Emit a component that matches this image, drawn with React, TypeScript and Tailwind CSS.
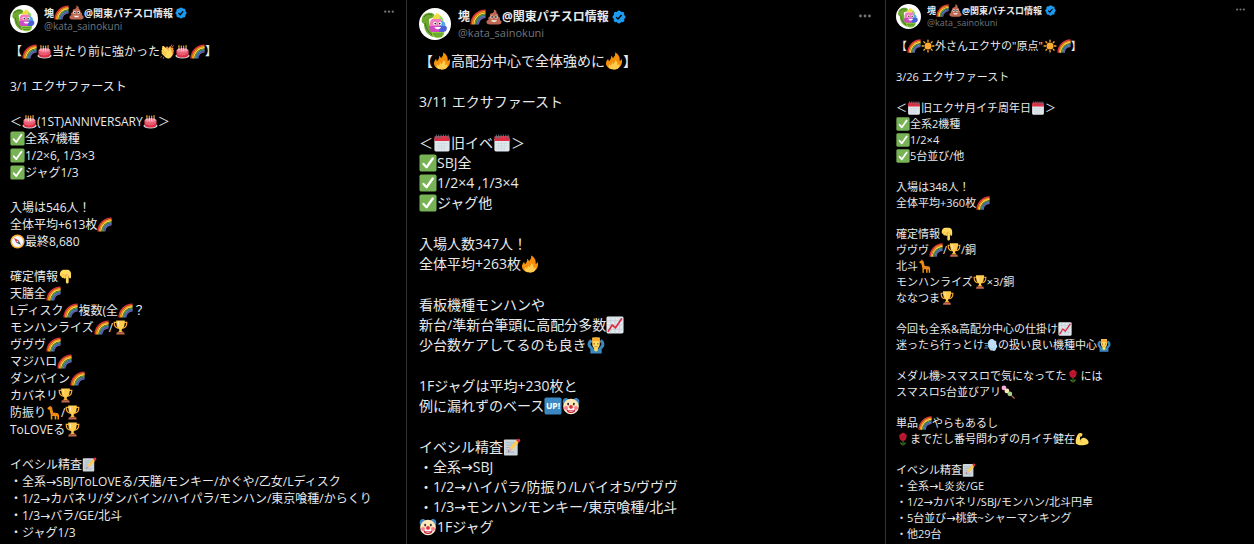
import { ReactNode } from 'react';

type PostSize = 'small' | 'medium' | 'large';

type Post = {
  id: string;
  size: PostSize;
  paragraphs: string[][];
};

const author = {
  name: '塊🌈💩@関東パチスロ情報',
  handle: '@kata_sainokuni',
};

const posts: Post[] = [
  {
    id: '0301',
    size: 'medium',
    paragraphs: [
      ['【🌈🎂当たり前に強かった👏🎂🌈】'],
      ['3/1 エクサファースト'],
      ['＜🎂(1ST)ANNIVERSARY🎂＞', '✅全系7機種', '✅1/2×6, 1/3×3', '✅ジャグ1/3'],
      ['入場は546人！', '全体平均+613枚🌈', '🧭最終8,680'],
      [
        '確定情報👇',
        '天膳全🌈',
        'Lディスク🌈複数(全🌈？',
        'モンハンライズ🌈/🏆',
        'ヴヴヴ🌈',
        'マジハロ🌈',
        'ダンバイン🌈',
        'カバネリ🏆',
        '防振り🦒/🏆',
        'ToLOVEる🏆',
      ],
      [
        'イベシル精査📝',
        '・全系→SBJ/ToLOVEる/天膳/モンキー/かぐや/乙女/Lディスク',
        '・1/2→カバネリ/ダンバイン/ハイパラ/モンハン/東京喰種/からくり',
        '・1/3→バラ/GE/北斗',
        '・ジャグ1/3',
      ],
    ],
  },
  {
    id: '0311',
    size: 'large',
    paragraphs: [
      ['【🔥高配分中心で全体強めに🔥】'],
      ['3/11 エクサファースト'],
      ['＜🗓旧イベ🗓＞', '✅SBJ全', '✅1/2×4 ,1/3×4', '✅ジャグ他'],
      ['入場人数347人！', '全体平均+263枚🔥'],
      ['看板機種モンハンや', '新台/準新台筆頭に高配分多数📈', '少台数ケアしてるのも良き🙆'],
      ['1Fジャグは平均+230枚と', '例に漏れずのベース🆙🤡'],
      [
        'イベシル精査📝',
        '・全系→SBJ',
        '・1/2→ハイパラ/防振り/Lバイオ5/ヴヴヴ',
        '・1/3→モンハン/モンキー/東京喰種/北斗',
        '🤡1Fジャグ',
      ],
    ],
  },
  {
    id: '0326',
    size: 'small',
    paragraphs: [
      ['【🌈☀外さんエクサの"原点"☀🌈】'],
      ['3/26 エクサファースト'],
      ['＜🗓旧エクサ月イチ周年日🗓＞', '✅全系2機種', '✅1/2×4', '✅5台並び/他'],
      ['入場は348人！', '全体平均+360枚🌈'],
      ['確定情報👇', 'ヴヴヴ🌈/🏆/銅', '北斗🦒', 'モンハンライズ🏆×3/銅', 'ななつま🏆'],
      ['今回も全系&高配分中心の仕掛け📈', '迷ったら行っとけ💨の扱い良い機種中心🙆'],
      ['メダル機>スマスロで気になってた🌹には', 'スマスロ5台並びアリ🍡'],
      ['単品🌈やらもあるし', '🌹までだし番号問わずの月イチ健在💪'],
      [
        'イベシル精査📝',
        '・全系→L炎炎/GE',
        '・1/2→カバネリ/SBJ/モンハン/北斗円卓',
        '・5台並び→桃鉄~シャーマンキング',
        '・他29台',
      ],
    ],
  },
];

const sizes = {
  small: {
    card: 'px-[10px] pt-1',
    avatar: 'size-[25px]',
    header: 'gap-[6px]',
    name: 'text-[9px] leading-[13px]',
    nameEmoji: 'size-[13px]',
    badge: 'size-[11px] ml-[3px]',
    handle: 'text-[9px] leading-[12px]',
    more: 'w-[9px] mt-1 -mr-px',
    body: 'mt-[9px] gap-[15px] text-[11px] leading-[16px]',
    emoji: 'size-[14px]',
  },
  medium: {
    card: 'px-[10px] pt-[5px]',
    avatar: 'size-[28px]',
    header: 'gap-[6px]',
    name: 'text-[10px] leading-[14px]',
    nameEmoji: 'size-[15px]',
    badge: 'size-[12px] ml-[2px]',
    handle: 'text-[10px] leading-[13px]',
    more: 'w-[10px] mt-[5px] mr-[2px]',
    body: 'mt-[10px] gap-[18px] text-[12px] leading-[17px]',
    emoji: 'size-[15px]',
  },
  large: {
    card: 'px-3 pt-2',
    avatar: 'size-[32px]',
    header: 'gap-[7px]',
    name: 'text-[12px] leading-[17px]',
    nameEmoji: 'size-[16px]',
    badge: 'size-[14px] ml-[3px]',
    handle: 'text-[11px] leading-[15px]',
    more: 'w-[12px] mt-[6px] mr-[2px]',
    body: 'mt-[11px] gap-[21px] text-[14px] leading-[20px]',
    emoji: 'size-[18px]',
  },
};

const emojis: Record<string, { label: string; art: ReactNode }> = {
  '🌈': {
    label: '虹',
    art: (
      <g fill="none" strokeWidth="3.6">
        <path stroke="#DD2E44" d="M1.8 36A34.2 34.2 0 0 1 36 1.8" />
        <path stroke="#F4900C" d="M5.2 36A30.8 30.8 0 0 1 36 5.2" />
        <path stroke="#FFCC4D" d="M8.6 36A27.4 27.4 0 0 1 36 8.6" />
        <path stroke="#5C913B" d="M12 36A24 24 0 0 1 36 12" />
        <path stroke="#3B88C3" d="M15.4 36A20.6 20.6 0 0 1 36 15.4" />
        <path stroke="#6F5BA8" d="M18.6 36A17.4 17.4 0 0 1 36 18.6" />
      </g>
    ),
  },
  '🎂': {
    label: 'バースデーケーキ',
    art: (
      <>
        <ellipse cx="18" cy="29" rx="18" ry="7" fill="#CCD6DD" />
        <path fill="#DD2E44" d="M3 18h30v9c0 4-7 6.5-15 6.5S3 31 3 27z" />
        <path fill="#EA596E" d="M3 15h30v7c-2 5-5 1-7 4s-5 0-8 2-5-2-8-1-5-3-7-5z" />
        <ellipse cx="18" cy="15" rx="15" ry="5.5" fill="#F4829A" />
        <path stroke="#FFE0C2" strokeWidth="2.6" d="M9 7v8M15 8v9M21 8v9M27 7v8" />
        <path stroke="#FFAC33" strokeWidth="3" strokeLinecap="round" d="M9 3v3M15 4v3M21 4v3M27 3v3" />
      </>
    ),
  },
  '👏': {
    label: '拍手',
    art: (
      <>
        <path fill="#EF9645" d="M13 9c3-5 6-4 7 0l4-4c4-2 5 2 3 4l3-1c4 0 4 3 2 5 3 1 3 4 1 6 2 4-3 12-10 13L10 27z" />
        <path fill="#FFDC5D" d="M5 8c-2 2-1 4 0 5-3 1-3 4-1 6-2 2-1 4 1 6l8 8c5 4 12 3 15-2 4-5 2-9 0-13l-3-8c-2-3-5-1-4 2l1 5L9 5c-3-2-6 0-4 3z" />
        <path stroke="#F19020" strokeWidth="1.3" fill="none" strokeLinecap="round" d="M5 13l10 9M4 19l9 8" />
        <path stroke="#FA743E" strokeWidth="2" strokeLinecap="round" d="M29 1l-2 4M34 3l-4 3M3 30l-2 3M8 33l-1 3" />
      </>
    ),
  },
  '✅': {
    label: 'チェック',
    art: (
      <>
        <rect width="36" height="36" rx="4" fill="#77B255" />
        <path fill="none" stroke="#FFF" strokeWidth="4.8" strokeLinecap="round" strokeLinejoin="round" d="M8.5 20l6.5 7L28 8.5" />
      </>
    ),
  },
  '🧭': {
    label: 'コンパス',
    art: (
      <>
        <circle cx="18" cy="18" r="18" fill="#FFAC33" />
        <circle cx="18" cy="18" r="14" fill="#F5F8FA" />
        <path fill="#DD2E44" d="M9 9l12 6-6 6z" />
        <path fill="#50616E" d="M27 27l-12-6 6-6z" />
        <circle cx="18" cy="18" r="2" fill="#FFF" />
      </>
    ),
  },
  '👇': {
    label: '下向き指',
    art: (
      <>
        <path fill="#FFDC5D" d="M12 1h12c5 1 8 5 8 10v9c0 4-5 4-5 0l-1-2v14c0 5-7 5-7 0V21c-1 3-5 3-6 0-2 2-6 0-5-3-4 0-5-4-4-8 1-5 4-8 8-9z" />
        <path fill="none" stroke="#EF9645" strokeWidth="1.6" strokeLinecap="round" d="M8 18c0-3 1-5 4-5M13 21c0-4 2-5 6-5M19 21v-8c3-1 6 1 7 5" />
      </>
    ),
  },
  '🏆': {
    label: 'トロフィー',
    art: (
      <>
        <path fill="none" stroke="#FFAC33" strokeWidth="3" d="M9 5H2c0 9 4 14 10 15M27 5h7c0 9-4 14-10 15" />
        <path fill="#FFCC4D" d="M7 0h22c0 12-2 20-8 23v5h-6v-5C9 20 7 12 7 0z" />
        <path fill="#FFAC33" d="M14 26h8l2 4H12z" />
        <path fill="#C1694F" d="M9 30h18l2 6H7z" />
        <path fill="#FFE8B6" d="M11 3h3c0 7 0 11 2 15-4-4-5-8-5-15z" />
      </>
    ),
  },
  '🦒': {
    label: 'キリン',
    art: (
      <>
        <path fill="#F4900C" d="M3 6l5-3 1-3 2 3c3 1 4 3 4 6l2 9 9 1c4 0 6 3 6 7v10h-4v-8l-3-1v9h-4v-9h-6v9h-4V24L8 11l-5-1z" />
        <path fill="#C1694F" d="M9 5h2v2H9zM11 11l3 1v3zM14 19l4 2-2 4zM21 20l4 1-2 3zM27 22l3 3-3 1z" />
      </>
    ),
  },
  '📝': {
    label: 'メモ',
    art: (
      <>
        <rect x="1" y="2" width="29" height="34" rx="2" fill="#CCD6DD" />
        <path stroke="#99AAB5" strokeWidth="1.5" d="M5 9h19M5 14h16M5 19h10M5 24h8M5 29h18" />
        <path fill="#FFCC4D" d="M27 4l5 5-14 15-6 2 1-6z" />
        <path fill="#F4ABBA" d="M10 28l3-9 6 5z" />
        <path fill="#DD2E44" d="M30 1c3-2 7 2 5 5l-3 3-5-5z" />
        <path fill="#292F33" d="M10 28l1-3 2 2z" />
      </>
    ),
  },
  '🔥': {
    label: '炎',
    art: (
      <>
        <path fill="#F4900C" d="M35 19c0-2-1-5-2-6 0 2-1 4-3 5C31 9 27 3 20 0c2 5-1 8-4 12-1-2-2-4-4-5 1 5-2 8-4 11-2-1-2-3-2-5-3 3-5 6-5 10 0 8 8 13 17 13s17-8 17-17z" />
        <path fill="#FFCC4D" d="M29 24c-1 2-2 3-4 3 1-5-1-9-4-11 0 4-3 6-4 9-1-1-2-2-2-4-2 2-3 5-4 7-1-1-2-2-2-4-7 9 3 12 9 12 7 0 14-4 11-12z" />
      </>
    ),
  },
  '🗓': {
    label: 'カレンダー',
    art: (
      <>
        <path fill="#E1E8ED" d="M2 9h32v24a3 3 0 0 1-3 3H5a3 3 0 0 1-3-3z" />
        <path fill="#DD2E44" d="M5 3h26a3 3 0 0 1 3 3v8H2V6a3 3 0 0 1 3-3z" />
        <path stroke="#66757F" strokeWidth="2" strokeLinecap="round" d="M6 1v6M11 1v6M16 1v6M21 1v6M26 1v6M31 1v6" />
        <path stroke="#C6D1D8" strokeWidth="1" d="M6 19h24M6 24h24M6 29h18M11 16v17M17 16v17M23 16v17" />
      </>
    ),
  },
  '📈': {
    label: '上昇グラフ',
    art: (
      <>
        <rect width="36" height="36" rx="3" fill="#E1E8ED" />
        <path stroke="#B4C2CC" strokeWidth="1.2" d="M0 9h36M0 18h36M0 27h36M9 0v36M18 0v36M27 0v36" />
        <path fill="none" stroke="#DD2E44" strokeWidth="3.6" strokeLinecap="round" strokeLinejoin="round" d="M4 31l8-13 7 6L32 5" />
      </>
    ),
  },
  '🙆': {
    label: 'OKのポーズの男性',
    art: (
      <>
        <path fill="#3B88C3" d="M6 36v-9L1 21c-2-6 0-11 5-15l4 4c-3 3-4 6-3 8l6 8h10l6-8c1-2 0-5-3-8l4-4c5 4 7 9 5 15l-5 6v9z" />
        <path fill="#FFDC5D" d="M10 2h16v5H10zM14 22h8v7l-4 3-4-3z" />
        <path fill="#FFDC5D" d="M10 9h16v7c0 6-4 10-8 10s-8-4-8-10z" />
        <path fill="#FFAC33" d="M9 15C8 7 11 2 18 2s10 5 9 13c-1-3-3-5-5-6-4 2-8 1-9 0-2 1-3 3-4 6z" />
        <path stroke="#662113" strokeWidth="2" strokeLinecap="round" d="M14 15v1M22 15v1" />
        <path fill="none" stroke="#C1694F" strokeWidth="1.5" strokeLinecap="round" d="M15 21c2 1 4 1 6 0" />
      </>
    ),
  },
  '🆙': {
    label: 'UP',
    art: (
      <>
        <rect width="36" height="36" rx="4" fill="#3B88C3" />
        <text x="18" y="24" textAnchor="middle" fontSize="18" fontWeight="700" fill="#FFF" fontFamily="Open Sans">
          UP!
        </text>
      </>
    ),
  },
  '🤡': {
    label: 'ピエロ',
    art: (
      <>
        <path fill="#3B88C3" d="M1 13C-1 5 3 0 9 1c4 1 4 6 2 10zM35 13c2-8-2-13-8-12-4 1-4 6-2 10z" />
        <circle cx="18" cy="19" r="16.5" fill="#FEE7B8" />
        <path fill="#FFF" d="M6 26c4-5 20-5 24 0-2 6-7 8-12 8S8 32 6 26z" />
        <path fill="#BE1931" d="M8 25c6 3 14 3 20 0-1 6-5 8-10 8s-9-2-10-8z" />
        <path fill="#FFF" d="M11 27c5 2 9 2 14 0-2 4-12 4-14 0z" />
        <circle cx="7.5" cy="22" r="4" fill="#FF7892" />
        <circle cx="28.5" cy="22" r="4" fill="#FF7892" />
        <circle cx="18" cy="20" r="4" fill="#DD2E44" />
        <ellipse cx="12" cy="14" rx="2" ry="3" fill="#292F33" />
        <ellipse cx="24" cy="14" rx="2" ry="3" fill="#292F33" />
      </>
    ),
  },
  '💩': {
    label: 'うんち',
    art: (
      <>
        <path fill="#BF6952" d="M17 0c5 1 8 4 7 9 4 1 5 5 4 8 4 1 5 5 4 8 3 1 4 3 4 5 0 4-4 6-8 6H8c-4 0-8-2-8-6 0-3 2-5 5-5-2-4 0-8 4-8-2-4 0-8 4-8 5-1 6-4 4-9z" />
        <circle cx="13" cy="18" r="3.6" fill="#F5F8FA" />
        <circle cx="23" cy="18" r="3.6" fill="#F5F8FA" />
        <circle cx="13.5" cy="18" r="2.2" fill="#292F33" />
        <circle cx="22.5" cy="18" r="2.2" fill="#292F33" />
        <path fill="#F5F8FA" d="M11 26h14c-2 5-12 5-14 0z" />
      </>
    ),
  },
  '☀': {
    label: '太陽',
    art: (
      <>
        <path stroke="#FFAC33" strokeWidth="3.6" strokeLinecap="round" d="M18 2v4M18 30v4M2 18h4M30 18h4M6.7 6.7l2.8 2.8M26.5 26.5l2.8 2.8M6.7 29.3l2.8-2.8M26.5 9.5l2.8-2.8" />
        <circle cx="18" cy="18" r="9.5" fill="#FFAC33" />
      </>
    ),
  },
  '💨': {
    label: 'ダッシュ',
    art: (
      <>
        <path fill="#BDDDF4" d="M13 5c5-5 12-4 14 1 5 0 7 5 5 9 4 4 4 9 0 12 0 6-6 9-10 6-6 0-9-3-9-7-4-3-4-6-3-9-1-5 0-9 3-12z" />
        <path stroke="#5DADEC" strokeWidth="2.5" strokeLinecap="round" d="M1 14h8M3 20h9M1 26h7" />
        <path fill="#A2D4F6" d="M15 24c4 3 8 3 13 0 0 7-11 8-13 0z" />
      </>
    ),
  },
  '🌹': {
    label: 'バラ',
    art: (
      <>
        <path stroke="#3E721D" strokeWidth="3" d="M18 19v17" />
        <path fill="#3E721D" d="M17 34c-5 0-7-3-7-7 4 0 7 3 7 7zM19 34c5 0 7-3 7-7-4 0-7 3-7 7z" />
        <path fill="#BE1931" d="M8 7c3-1 5-4 8-5 4-2 7 0 8 3 3 0 4 1 4 3 0 9-3 15-10 15S7 16 8 7z" />
        <path fill="none" stroke="#A0041E" strokeWidth="1.6" d="M10 9c4 1 4 5 8 5s4-4 8-5" />
      </>
    ),
  },
  '🍡': {
    label: '団子',
    art: (
      <>
        <path stroke="#C1694F" strokeWidth="3" strokeLinecap="round" d="M5 5l30 30" />
        <circle cx="7" cy="7" r="6.5" fill="#F4ABDB" />
        <circle cx="15" cy="15" r="6.5" fill="#FFE8B6" />
        <circle cx="23" cy="23" r="6.5" fill="#A6D388" />
      </>
    ),
  },
  '💪': {
    label: '力こぶ',
    art: (
      <>
        <path fill="#FFDC5D" d="M8 4c3-3 8-3 11 0 1 3-1 6-3 8l-3-1c-1 4-1 8 0 11 3-7 9-9 14-6 5 2 9 7 9 11 0 6-9 8-18 8-8 0-16-2-17-7C0 20 3 10 8 4z" />
        <path fill="none" stroke="#EF9645" strokeWidth="1.8" strokeLinecap="round" d="M14 22c0 2 1 4 3 5M10 5c2 0 3 2 2 5" />
      </>
    ),
  },
};

const emojiPattern = new RegExp(`(${Object.keys(emojis).join('|')})`, 'u');

function RichText({ text, emojiClass }: { text: string; emojiClass: string }) {
  return text
    .split(emojiPattern)
    .filter(Boolean)
    .map((part, i) => {
      const emoji = emojis[part];
      if (!emoji) {
        return <span key={i}>{part}</span>;
      }
      return (
        <svg key={i} role="img" aria-label={emoji.label} viewBox="-1 -1 38 38" className={`shrink-0 ${emojiClass}`}>
          {emoji.art}
        </svg>
      );
    });
}

function Avatar({ className }: { className: string }) {
  return (
    <svg viewBox="0 0 32 32" className={`shrink-0 rounded-full bg-white ${className}`} aria-hidden="true">
      <path fill="#6FA82E" d="M3 11c0-4 5-7 10-6 3 1 3 4 0 5l-3 1c0 5 1 9 4 13v5c-5-2-9-6-9-13-2-1-3-3-2-5z" />
      <path fill="none" stroke="#3E7420" strokeWidth="1" d="M5 9c2-3 5-3 8-2M6 15c1 5 3 9 7 12" />
      <path fill="#8CCB3C" d="M13 23h12c1 4-2 7-6 7s-7-2-6-7z" />
      <path fill="none" stroke="#4E8A2C" strokeWidth="1" d="M14 26h10M15 28h8" />
      <path fill="#F1DE45" d="M17 5c4 1 6 3 5 6h-8c-1-2 1-3 2-4 1 0 1-1 1-2z" />
      <path fill="#8EDB6A" d="M21 8c3 1 4 4 3 6h-4z" />
      <path fill="#F27CC0" d="M13 11h9l2 8H12c-2-3-1-6 1-8z" />
      <path fill="#54A5E8" d="M22 13c4 0 5 3 4 6h-5z" />
      <path fill="#4B5FD6" d="M20 18h7c2 3 0 6-3 6h-5z" />
      <path fill="#D04AC8" d="M11 18h10l-1 6h-7c-3-1-3-4-2-6z" />
      <circle cx="16" cy="15.5" r="1.7" fill="#FFF" />
      <circle cx="21" cy="15.5" r="1.7" fill="#FFF" />
      <circle cx="16.3" cy="15.6" r=".9" fill="#222" />
      <circle cx="20.7" cy="15.6" r=".9" fill="#222" />
      <path fill="#FFF" d="M15.500 19h6.500c-1 3-5.500 3-6.500 0z" />
    </svg>
  );
}

function VerifiedBadge({ className }: { className: string }) {
  return (
    <svg viewBox="0 0 22 22" role="img" aria-label="認証済みアカウント" className={`shrink-0 ${className}`}>
      <g fill="#1D9BF0">
        <circle cx="11" cy="11" r="8.5" />
        <circle cx="11" cy="4" r="3.3" />
        <circle cx="11" cy="18" r="3.3" />
        <circle cx="4" cy="11" r="3.3" />
        <circle cx="18" cy="11" r="3.3" />
        <circle cx="6" cy="6" r="3.3" />
        <circle cx="16" cy="6" r="3.3" />
        <circle cx="6" cy="16" r="3.3" />
        <circle cx="16" cy="16" r="3.3" />
      </g>
      <path fill="none" stroke="#000" strokeWidth="2.2" d="M6.5 11.2l3 3 5.5-6.4" />
    </svg>
  );
}

function PostCard({ post }: { post: Post }) {
  const s = sizes[post.size];

  return (
    <article className={`min-w-0 overflow-hidden border-[#2f3336] not-first:border-l ${s.card}`}>
      <header className={`flex items-start ${s.header}`}>
        <Avatar className={s.avatar} />
        <div className="min-w-0 flex-1 whitespace-nowrap">
          <h2 className={`flex items-center font-bold ${s.name}`}>
            <RichText text={author.name} emojiClass={s.nameEmoji} />
            <VerifiedBadge className={s.badge} />
          </h2>
          <a href="#profile" className={`block text-[#71767b] ${s.handle}`}>
            {author.handle}
          </a>
        </div>
        <button type="button" aria-label="もっと見る" className={`shrink-0 text-[#71767b] ${s.more}`}>
          <svg viewBox="0 0 12 4" className="w-full" fill="currentColor">
            <circle cx="1.5" cy="2" r="1.4" />
            <circle cx="6" cy="2" r="1.4" />
            <circle cx="10.5" cy="2" r="1.4" />
          </svg>
        </button>
      </header>

      <div className={`flex flex-col ${s.body}`}>
        {post.paragraphs.map((lines, i) => (
          <div key={i}>
            {lines.map((line) => (
              <p key={line} className="flex items-center whitespace-pre">
                <RichText text={line} emojiClass={s.emoji} />
              </p>
            ))}
          </div>
        ))}
      </div>
    </article>
  );
}

export default function App() {
  return (
    <main
      lang="ja"
      className="grid min-h-screen grid-cols-[406fr_479fr_369fr] bg-black font-['Open_Sans','DejaVu_Sans','Noto_Sans_CJK_JP',sans-serif] text-[#e7e9ea]"
    >
      {posts.map((post) => (
        <PostCard key={post.id} post={post} />
      ))}
    </main>
  );
}
